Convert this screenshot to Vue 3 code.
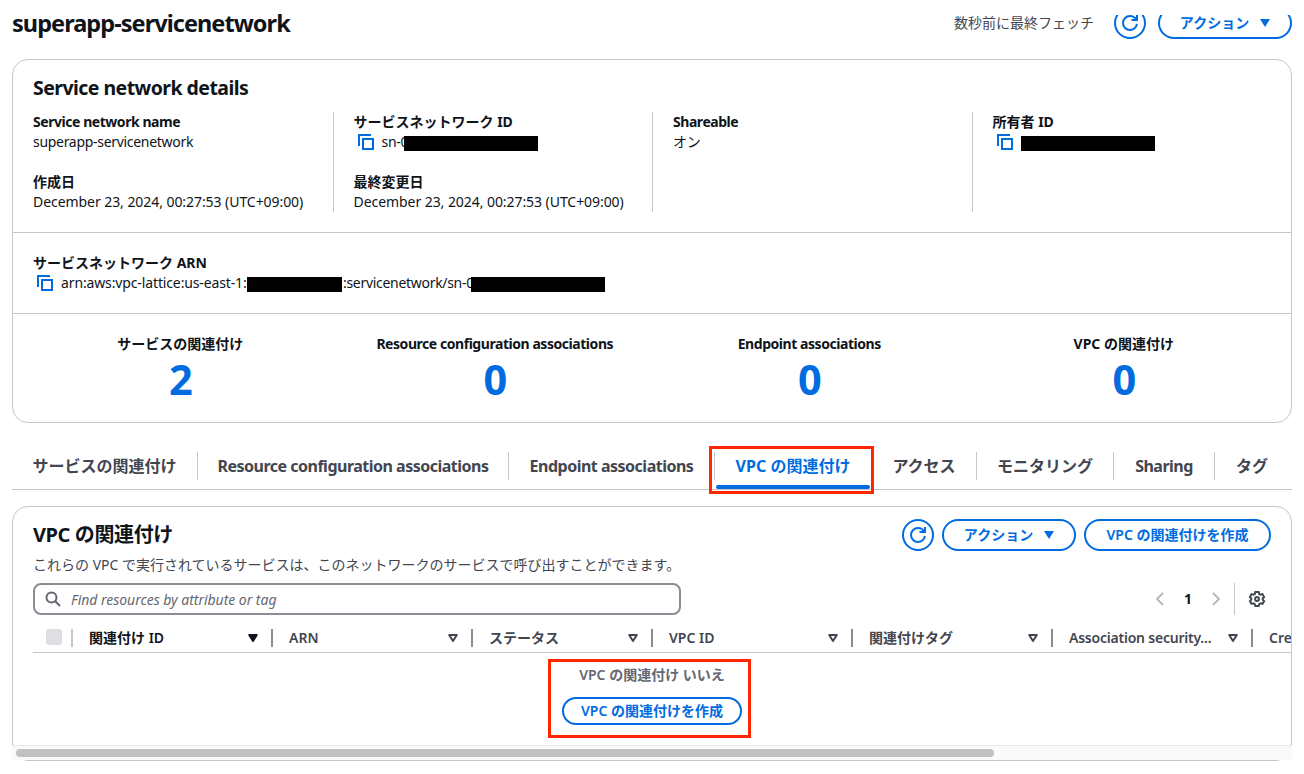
<script setup>
import { ref } from 'vue'

const counts = ref([
  { label: 'サービスの関連付け', value: 2 },
  { label: 'Resource configuration associations', value: 0, latin: true },
  { label: 'Endpoint associations', value: 0, latin: true },
  { label: 'VPC の関連付け', value: 0 },
])

const tabs = [
  { label: 'サービスの関連付け' },
  { label: 'Resource configuration associations', latin: true },
  { label: 'Endpoint associations', latin: true },
  { label: 'VPC の関連付け' },
  { label: 'アクセス' },
  { label: 'モニタリング' },
  { label: 'Sharing', latin: true },
  { label: 'タグ' },
]
const activeTab = ref(3)

const columns = [
  { label: '関連付け ID', width: 200, sorted: true },
  { label: 'ARN', width: 200 },
  { label: 'ステータス', width: 180 },
  { label: 'VPC ID', width: 200 },
  { label: '関連付けタグ', width: 200 },
  { label: 'Association security...', width: 200, latin: true },
  { label: 'Cre', width: 200 },
]
const search = ref('')
</script>

<template>
  <svg class="defs" width="0" height="0">
    <symbol id="refresh" viewBox="0 0 16 16">
      <path d="M14.900 9c-.5 3.400-3.400 6-6.900 6-3.900 0-7-3.100-7-7s3.100-7 7-7c2.800 0 5.200 1.600 6.300 4M15 0v5H9.500" />
    </symbol>
    <symbol id="copy" viewBox="0 0 16 16">
      <path d="M5 5h10v10H5zM1 12V1h12" />
    </symbol>
  </svg>
  <div class="page">
    <header class="page-header">
      <h1>superapp-servicenetwork</h1>
      <div class="actions">
        <span class="fetched">数秒前に最終フェッチ</span>
        <button class="btn round"><svg class="icon"><use href="#refresh" /></svg></button>
        <button class="btn menu">アクション<i class="caret"></i></button>
      </div>
    </header>

    <section class="card details">
      <h2>Service network details</h2>
      <div class="columns">
        <div class="col">
          <div class="label en">Service network name</div>
          <div class="value">superapp-servicenetwork</div>
          <div class="label second">作成日</div>
          <div class="value date">December 23, 2024, 00:27:53 (UTC+09:00)</div>
        </div>
        <div class="col">
          <div class="label">サービスネットワーク ID</div>
          <div class="value copy"><svg class="icon"><use href="#copy" /></svg><span>sn-0</span><b class="mask"></b></div>
          <div class="label second">最終変更日</div>
          <div class="value date">December 23, 2024, 00:27:53 (UTC+09:00)</div>
        </div>
        <div class="col">
          <div class="label en">Shareable</div>
          <div class="value">オン</div>
        </div>
        <div class="col">
          <div class="label">所有者 ID</div>
          <div class="value copy"><svg class="icon"><use href="#copy" /></svg><b class="mask"></b></div>
        </div>
      </div>
      <div class="arn">
        <div class="label">サービスネットワーク ARN</div>
        <div class="value copy">
          <svg class="icon"><use href="#copy" /></svg><span class="arn-start">arn:aws:vpc-lattice:us-east-1:</span><b class="mask account"></b><span class="arn-end">:servicenetwork/sn-0</span><b class="mask"></b>
        </div>
      </div>
      <div class="counts">
        <div v-for="c in counts" :key="c.label" class="count">
          <div class="label" :class="{ en: c.latin }">{{ c.label }}</div>
          <a>{{ c.value }}</a>
        </div>
      </div>
    </section>

    <nav class="tabs">
      <div v-for="(tab, i) in tabs" :key="tab.label" class="tab" :class="{ active: i === activeTab, en: tab.latin }" @click="activeTab = i">
        <span>{{ tab.label }}</span>
      </div>
      <div class="highlight tab-highlight"></div>
    </nav>

    <section class="card table-card">
      <div class="table-top">
        <h2>VPC の関連付け</h2>
        <div class="actions">
          <button class="btn round"><svg class="icon"><use href="#refresh" /></svg></button>
          <button class="btn menu">アクション<i class="caret"></i></button>
          <button class="btn create">VPC の関連付けを作成</button>
        </div>
      </div>
      <p class="description">これらの VPC で実行されているサービスは、このネットワークのサービスで呼び出すことができます。</p>
      <div class="tools">
        <label class="search">
          <svg class="icon" viewBox="0 0 16 16"><circle cx="6.500" cy="6.500" r="5" /><path d="M10 10l5 5" /></svg>
          <input v-model="search" placeholder="Find resources by attribute or tag">
        </label>
        <div class="pager">
          <svg class="chevron" viewBox="0 0 8 14"><path d="M7 1L1 7l6 6" /></svg>
          <span>1</span>
          <svg class="chevron" viewBox="0 0 8 14"><path d="M1 1l6 6-6 6" /></svg>
        </div>
        <svg class="gear" viewBox="0 0 16 16">
          <path d="M6.300 1h3.400l.5 2 1.300.7 2-.6 1.600 2.900-1.400 1.500v1.100l1.400 1.500-1.600 2.800-2-.5-1.300.7-.5 1.900H6.300l-.5-1.900-1.300-.7-2 .5-1.600-2.800 1.400-1.500V7.500L.9 6l1.600-2.900 2 .6L5.800 3z" />
          <circle cx="8" cy="8" r="1.900" />
        </svg>
      </div>
      <div class="thead">
        <div class="check"><i></i></div>
        <div v-for="col in columns" :key="col.label" class="th" :class="{ sorted: col.sorted, en: col.latin }" :style="{ width: col.width + 'px' }">
          <span>{{ col.label }}</span>
          <svg viewBox="0 0 10 8"><path d="M1.200 1h7.600L5 7z" /></svg>
        </div>
      </div>
      <div class="empty">
        <div class="empty-text">VPC の関連付け いいえ</div>
        <button class="btn small">VPC の関連付けを作成</button>
        <div class="highlight empty-highlight"></div>
      </div>
      <div class="scrollbar"><div class="thumb"></div></div>
    </section>
  </div>
</template>

<style>
body {
  margin: 0;
  background: #fff;
}
</style>

<style scoped>
.page {
  box-sizing: border-box;
  width: 1304px;
  height: 774px;
  padding: 7px 12px 0;
  overflow: hidden;
  font-family: "Noto Sans", "Noto Sans CJK JP", sans-serif;
  font-size: 14px;
  line-height: 20px;
  color: #0f141a;
}
.defs {
  position: absolute;
}
h1, h2, p {
  margin: 0;
}
.page-header {
  display: flex;
  justify-content: space-between;
  align-items: center;
  height: 32px;
  margin-bottom: 20px;
}
h1 {
  font-size: 23.5px;
  font-weight: 680;
  line-height: 30px;
  letter-spacing: -0.95px;
}
h2 {
  font-size: 20px;
  line-height: 24px;
  letter-spacing: -0.4px;
}
.actions {
  display: flex;
  align-items: center;
  gap: 8px;
}
.fetched {
  margin-right: 12px;
  color: #424650;
}
.page-header .menu {
  margin-left: 4px;
}
.page-header .btn {
  clip-path: inset(8px 0 0 0);
}
.btn {
  display: flex;
  align-items: center;
  justify-content: center;
  box-sizing: border-box;
  height: 32px;
  padding: 0;
  border: 2px solid #006ce0;
  border-radius: 20px;
  background: #fff;
  color: #006ce0;
  font: 650 14px/20px "Noto Sans", "Noto Sans CJK JP", sans-serif;
}
.round {
  width: 32px;
}
.menu {
  width: 134px;
}
.create {
  width: 187px;
}
.small {
  width: 180px;
  height: 28px;
}
.caret {
  margin-left: 11px;
  border: 5px solid transparent;
  border-top: 8px solid #006ce0;
  border-bottom: 0;
}
.icon {
  flex: none;
  width: 16px;
  height: 16px;
  fill: none;
  stroke: #006ce0;
  stroke-width: 2;
}
.card {
  box-sizing: border-box;
  border: 1px solid #c6c6cd;
  border-radius: 16px;
}
.details {
  height: 364px;
}
.details h2 {
  padding: 16px 20px 12px;
  font-size: 19.5px;
  font-weight: 680;
  letter-spacing: -0.55px;
}
.columns {
  display: grid;
  grid-template-columns: repeat(4, 1fr);
  height: 100px;
  padding-bottom: 20px;
  border-bottom: 1px solid #c6c6cd;
}
.col {
  padding-left: 20px;
}
.col + .col {
  border-left: 1px solid #c6c6cd;
}
.label {
  font-weight: 680;
}
.label.en {
  letter-spacing: -0.45px;
}
.second {
  margin-top: 20px;
}
.value {
  height: 20px;
  letter-spacing: -0.3px;
  white-space: nowrap;
}
.date {
  letter-spacing: -0.06px;
}
.copy {
  display: flex;
  align-items: center;
  padding-left: 4px;
}
.copy .icon {
  margin-right: 8px;
}
.mask {
  flex: none;
  position: relative;
  width: 134px;
  height: 15px;
  margin-top: 3px;
  background: #000;
}
.copy span {
  width: 22px;
}
.mask.account {
  width: 95px;
}
.copy .arn-start {
  width: 186px;
  letter-spacing: -0.13px;
}
.copy .arn-end {
  box-sizing: border-box;
  width: 129px;
  padding-left: 1px;
}
.arn {
  height: 40px;
  padding: 20px;
  border-bottom: 1px solid #c6c6cd;
}
.counts {
  display: grid;
  grid-template-columns: repeat(4, 1fr);
  padding: 20px 10px;
  text-align: center;
}
.count a {
  display: block;
  padding-left: 1px;
  color: #006ce0;
  font-size: 41.5px;
  font-weight: bold;
  line-height: 50px;
}
.tabs {
  position: relative;
  display: grid;
  grid-template-columns: 186px 311px 206px 157px 105px 137px 101px 74px;
  height: 47px;
  margin-top: 19px;
  border-bottom: 1px solid #c6c6cd;
  color: #424650;
  font-size: 16px;
  font-weight: 680;
}
.tab {
  position: relative;
  display: flex;
  align-items: center;
  justify-content: center;
  height: 28px;
  margin-top: 10px;
  border-right: 1px solid #c6c6cd;
  white-space: nowrap;
}
.tab.en {
  letter-spacing: -0.5px;
}
.tab:nth-child(8) {
  border: 0;
}
.active {
  color: #006ce0;
}
.active::after {
  content: "";
  position: absolute;
  left: 1px;
  right: 1px;
  bottom: -9px;
  height: 4px;
  border-radius: 2px;
  background: #006ce0;
}
.highlight {
  position: absolute;
  box-sizing: border-box;
  border: 3px solid #ff2600;
}
.tab-highlight {
  left: 697px;
  top: 4px;
  width: 165px;
  height: 48px;
}
.table-card {
  height: 255px;
  margin-top: 16px;
}
.table-top {
  display: flex;
  align-items: center;
  justify-content: space-between;
  padding: 12px 20px 0;
}
.description {
  margin-top: 4px;
  padding-left: 20px;
  color: #424650;
}
.tools {
  display: flex;
  align-items: center;
  height: 32px;
  margin-top: 8px;
  padding: 0 26px 0 20px;
}
.search {
  display: flex;
  align-items: center;
  box-sizing: border-box;
  width: 648px;
  height: 32px;
  padding: 0 10px;
  border: 2px solid #8c8c94;
  border-radius: 8px;
}
.search .icon {
  stroke: #656871;
}
.search input {
  flex: 1;
  margin-left: 10px;
  padding: 0;
  border: 0;
  outline: 0;
  font: italic 14px "Noto Sans", "Noto Sans CJK JP", sans-serif;
  letter-spacing: -0.03px;
}
.search input::placeholder {
  color: #656871;
}
.pager {
  display: flex;
  align-items: center;
  justify-content: space-between;
  box-sizing: border-box;
  width: 79px;
  height: 32px;
  margin-left: auto;
  padding-right: 14px;
  border-right: 1px solid #c6c6cd;
  font-weight: bold;
}
.chevron {
  width: 8px;
  height: 14px;
  fill: none;
  stroke: #b4b4bb;
  stroke-width: 1.800;
}
.gear {
  width: 16px;
  height: 16px;
  margin-left: 14px;
  overflow: visible;
  fill: none;
  stroke: #424650;
  stroke-width: 2;
}
.thead {
  display: flex;
  align-items: center;
  height: 37px;
  margin-left: 20px;
  border-bottom: 1px solid #c6c6cd;
  overflow: hidden;
}
.check {
  flex: none;
  box-sizing: border-box;
  width: 40px;
  height: 18px;
  margin-top: 8px;
  padding-left: 13px;
  border-right: 2px solid #c6c6cd;
}
.check i {
  display: block;
  width: 16px;
  height: 16px;
  border-radius: 3px;
  background: #dedee3;
}
.th {
  flex: none;
  display: flex;
  align-items: center;
  justify-content: space-between;
  box-sizing: border-box;
  height: 18px;
  margin-top: 8px;
  padding: 0 13px 0 16px;
  border-right: 2px solid #8c8c94;
  color: #424650;
  font-weight: 650;
}
.th.en {
  letter-spacing: -0.22px;
}
.th svg {
  width: 10px;
  height: 8px;
  fill: none;
  stroke: currentColor;
  stroke-width: 2;
  stroke-linejoin: round;
}
.sorted {
  color: #0f141a;
}
.sorted svg {
  fill: currentColor;
}
.empty {
  position: relative;
  display: flex;
  flex-direction: column;
  align-items: center;
  height: 92px;
}
.empty-text {
  margin: 12px 0;
  color: #656871;
  font-weight: 650;
}
.empty-highlight {
  left: 535px;
  top: 6px;
  width: 203px;
  height: 79px;
}
.scrollbar {
  position: relative;
  box-sizing: border-box;
  height: 15px;
  margin: 0 -1px;
  padding: 3px 4px;
  border-top: 1px solid #e8e8e8;
  background: #fafafa;
}
.thumb {
  width: 978px;
  height: 8px;
  border-radius: 4px;
  background: #c1c1c1;
}
</style>
